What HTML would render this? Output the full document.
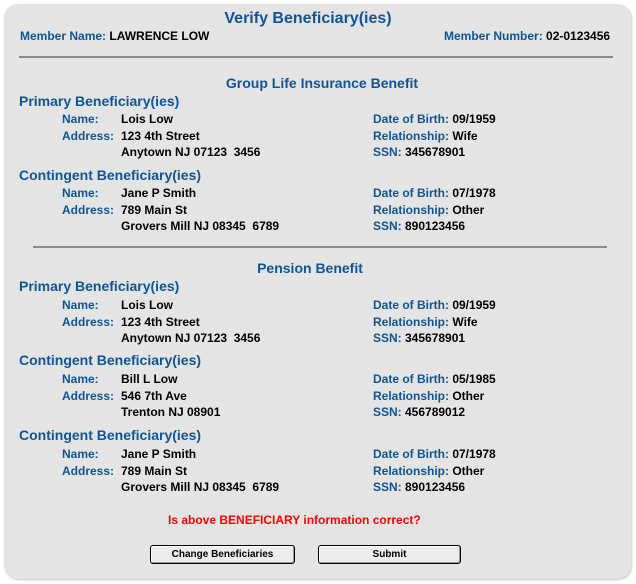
<!DOCTYPE html>
<html><head><meta charset="utf-8"><style>
body{margin:0;width:636px;height:584px;background:#fff;font-family:"Liberation Sans",Arial,sans-serif;position:relative;overflow:hidden}
.p{position:absolute;left:4px;top:4px;width:627px;height:575px;background:#e4e4e4;border-radius:14px;box-shadow:1px 1px 2px #c8c8c8}
div.t{position:absolute;white-space:nowrap;font-weight:bold;font-size:12px;line-height:14px;color:#000}
.b,div.t.b{color:#0f5596}
.h{font-size:14px!important;line-height:16px!important;color:#0f5596!important}
.hr{position:absolute;height:0;border-top:2px solid #8a8a8a}
.btn{position:absolute;top:545px;height:17px;border:1px solid #000;border-radius:3px;background:#ececec;box-shadow:inset -1px -1px 0 #999,inset 1px 1px 0 #fff;font-size:10px;font-weight:bold;text-align:center;line-height:17px;font-family:"Liberation Sans",Arial,sans-serif}
</style></head><body>
<div class="p"></div>
<div class="t h" style="left:0;width:616px;text-align:center;top:10px;font-size:16px!important;line-height:18px!important">Verify Beneficiary(ies)</div>
<div class="t" style="left:20px;top:29px"><span class="b">Member Name:</span> LAWRENCE LOW</div>
<div class="t" style="left:444px;top:29px"><span class="b">Member Number:</span> 02-0123456</div>
<div class="hr" style="left:19px;width:594px;top:56px"></div>
<div class="t h" style="left:0;width:644px;text-align:center;top:75px">Group Life Insurance Benefit</div>

<div class="t h" style="left:19px;top:93px">Primary Beneficiary(ies)</div>
<div class="t b" style="left:62px;top:112px">Name:</div><div class="t" style="left:121px;top:112px">Lois Low</div>
<div class="t b" style="left:62px;top:129px">Address:</div><div class="t" style="left:121px;top:129px">123 4th Street</div>
<div class="t" style="left:121px;top:145px">Anytown NJ 07123&nbsp; 3456</div>
<div class="t" style="left:373px;top:112px"><span class="b">Date of Birth:</span> 09/1959</div>
<div class="t" style="left:373px;top:129px"><span class="b">Relationship:</span> Wife</div>
<div class="t" style="left:373px;top:145px"><span class="b">SSN:</span> 345678901</div>

<div class="t h" style="left:19px;top:167px">Contingent Beneficiary(ies)</div>
<div class="t b" style="left:62px;top:186px">Name:</div><div class="t" style="left:121px;top:186px">Jane P Smith</div>
<div class="t b" style="left:62px;top:203px">Address:</div><div class="t" style="left:121px;top:203px">789 Main St</div>
<div class="t" style="left:121px;top:219px">Grovers Mill NJ 08345&nbsp; 6789</div>
<div class="t" style="left:373px;top:186px"><span class="b">Date of Birth:</span> 07/1978</div>
<div class="t" style="left:373px;top:203px"><span class="b">Relationship:</span> Other</div>
<div class="t" style="left:373px;top:219px"><span class="b">SSN:</span> 890123456</div>

<div class="hr" style="left:33px;width:574px;top:246px"></div>
<div class="t h" style="left:0;width:620px;text-align:center;top:260px">Pension Benefit</div>

<div class="t h" style="left:19px;top:278px">Primary Beneficiary(ies)</div>
<div class="t b" style="left:62px;top:298px">Name:</div><div class="t" style="left:121px;top:298px">Lois Low</div>
<div class="t b" style="left:62px;top:315px">Address:</div><div class="t" style="left:121px;top:315px">123 4th Street</div>
<div class="t" style="left:121px;top:331px">Anytown NJ 07123&nbsp; 3456</div>
<div class="t" style="left:373px;top:298px"><span class="b">Date of Birth:</span> 09/1959</div>
<div class="t" style="left:373px;top:315px"><span class="b">Relationship:</span> Wife</div>
<div class="t" style="left:373px;top:331px"><span class="b">SSN:</span> 345678901</div>

<div class="t h" style="left:19px;top:352px">Contingent Beneficiary(ies)</div>
<div class="t b" style="left:62px;top:372px">Name:</div><div class="t" style="left:121px;top:372px">Bill L Low</div>
<div class="t b" style="left:62px;top:389px">Address:</div><div class="t" style="left:121px;top:389px">546 7th Ave</div>
<div class="t" style="left:121px;top:405px">Trenton NJ 08901</div>
<div class="t" style="left:373px;top:372px"><span class="b">Date of Birth:</span> 05/1985</div>
<div class="t" style="left:373px;top:389px"><span class="b">Relationship:</span> Other</div>
<div class="t" style="left:373px;top:405px"><span class="b">SSN:</span> 456789012</div>

<div class="t h" style="left:19px;top:427px">Contingent Beneficiary(ies)</div>
<div class="t b" style="left:62px;top:447px">Name:</div><div class="t" style="left:121px;top:447px">Jane P Smith</div>
<div class="t b" style="left:62px;top:464px">Address:</div><div class="t" style="left:121px;top:464px">789 Main St</div>
<div class="t" style="left:121px;top:480px">Grovers Mill NJ 08345&nbsp; 6789</div>
<div class="t" style="left:373px;top:447px"><span class="b">Date of Birth:</span> 07/1978</div>
<div class="t" style="left:373px;top:464px"><span class="b">Relationship:</span> Other</div>
<div class="t" style="left:373px;top:480px"><span class="b">SSN:</span> 890123456</div>

<div class="t" style="left:168px;top:513px;color:#f00">Is above BENEFICIARY information correct?</div>
<div class="btn" style="left:150px;width:143px">Change Beneficiaries</div>
<div class="btn" style="left:318px;width:141px">Submit</div>
</body></html>
